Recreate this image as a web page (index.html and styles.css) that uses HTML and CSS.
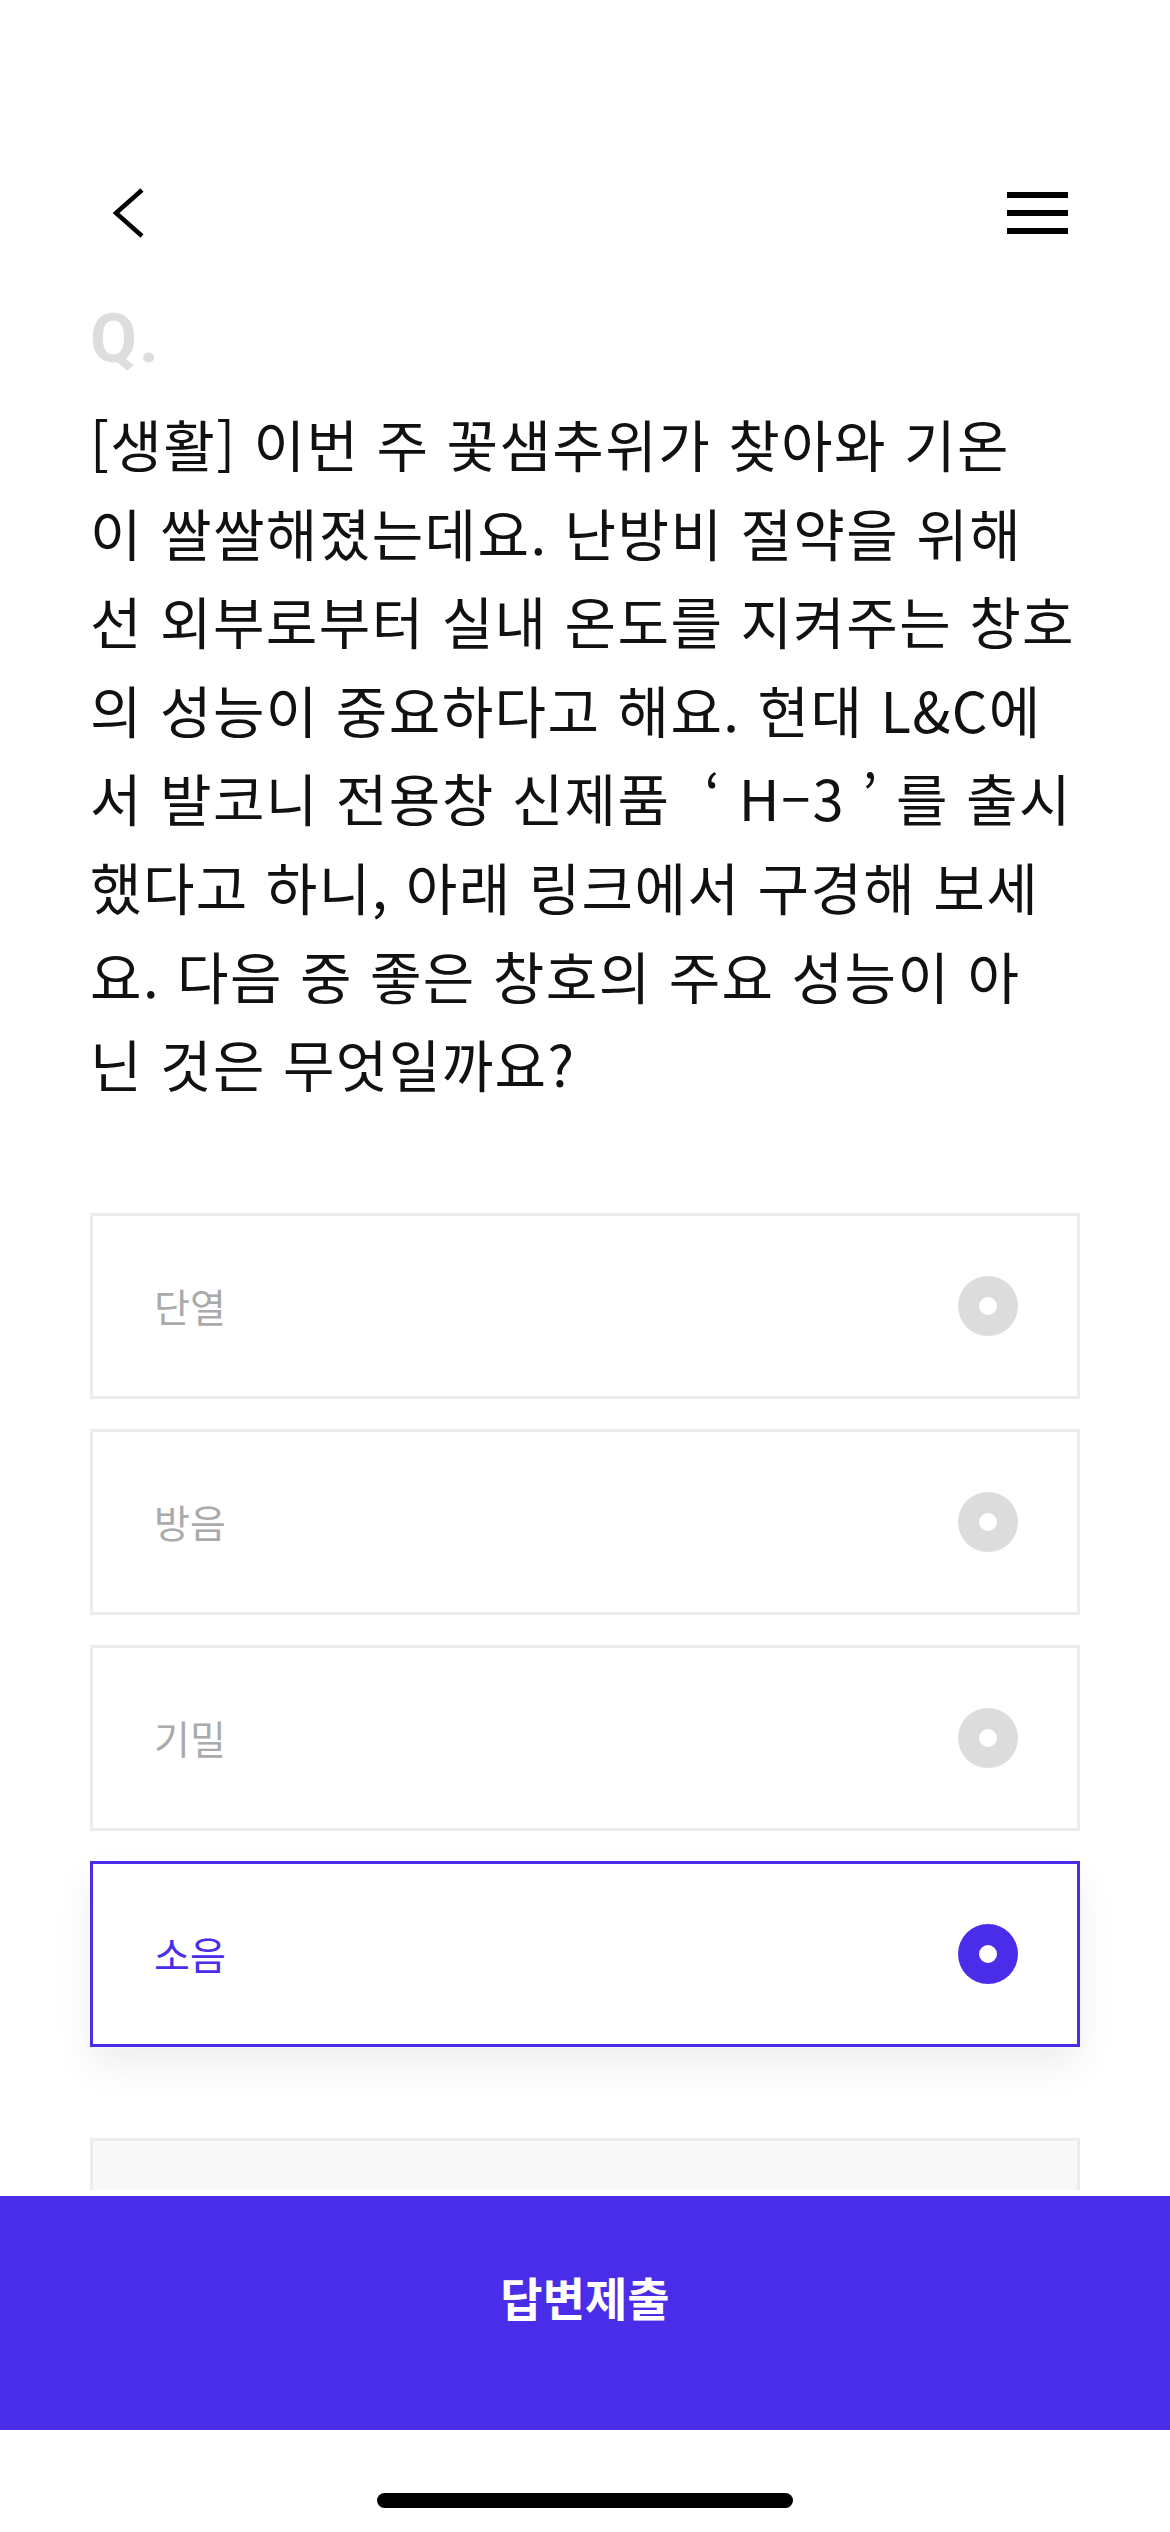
FILE: index.html
```html
<!DOCTYPE html>
<html lang="ko">
<head>
<meta charset="utf-8">
<title>퀴즈</title>
<link rel="stylesheet" href="styles.css">
</head>
<body>
<div class="screen">
  <main class="scroll">
    <header class="topbar">
      <button class="icon-btn back" aria-label="뒤로">
        <svg width="60" height="60" viewBox="0 0 60 60"><path d="M42 7 L16 30 L42 53" fill="none" stroke="#000" stroke-width="4.5" stroke-linejoin="miter"/></svg>
      </button>
      <button class="icon-btn menu" aria-label="메뉴">
        <svg width="70" height="60" viewBox="0 0 70 60"><rect x="7" y="9" width="61" height="6" fill="#000"/><rect x="7" y="27" width="61" height="6" fill="#000"/><rect x="7" y="45" width="61" height="6" fill="#000"/></svg>
      </button>
    </header>

    <section class="question">
      <div class="q-mark">Q.</div>
      <p class="q-text">[생활] 이번 주 꽃샘추위가 찾아와 기온<br>이 쌀쌀해졌는데요. 난방비 절약을 위해<br>선 외부로부터 실내 온도를 지켜주는 창호<br>의 성능이 중요하다고 해요. 현대 L&amp;C에<br>서 발코니 전용창 신제품 &nbsp;‘ H–3 ’ 를 출시<br>했다고 하니, 아래 링크에서 구경해 보세<br>요. 다음 중 좋은 창호의 주요 성능이 아<br>닌 것은 무엇일까요?</p>
    </section>

    <ul class="options">
      <li class="option"><span class="opt-label">단열</span><span class="radio"></span></li>
      <li class="option"><span class="opt-label">방음</span><span class="radio"></span></li>
      <li class="option"><span class="opt-label">기밀</span><span class="radio"></span></li>
      <li class="option selected"><span class="opt-label">소음</span><span class="radio"></span></li>
    </ul>

    <div class="link-box"></div>
  </main>

  <footer class="footer">
    <button class="submit">답변제출</button>
    <div class="home-bar"><span class="indicator"></span></div>
  </footer>
</div>
</body>
</html>
```

FILE: styles.css
```css
* { box-sizing: border-box; }
html, body { margin: 0; padding: 0; background: #fff; }
body {
  font-family: "Noto Sans CJK KR", "Noto Sans", sans-serif;
  color: #111;
}
.screen {
  width: 1170px;
  height: 2532px;
  display: flex;
  flex-direction: column;
  overflow: hidden;
}
.scroll {
  height: 2190px;
  overflow: hidden;
  flex: none;
}
.topbar {
  margin-top: 183px;
  height: 60px;
  padding: 0 100px;
  display: flex;
  justify-content: space-between;
  align-items: center;
}
.icon-btn {
  border: 0;
  background: none;
  padding: 0;
  display: block;
  height: 60px;
}
.icon-btn svg { display: block; }

.question { padding: 0 90px; }
.q-mark {
  margin-top: 56px;
  font-family: "Roboto", "Noto Sans", sans-serif;
  font-weight: 700;
  font-size: 68px;
  line-height: 80px;
  color: #dddddd;
  letter-spacing: 2px;
}
.q-text {
  margin: 20px 0 0;
  font-size: 56px;
  line-height: 88.6px;
  font-weight: 400;
  letter-spacing: 1.4px;
  color: #111;
  white-space: nowrap;
}

.options {
  list-style: none;
  margin: 105px 0 0;
  padding: 0 90px;
  display: flex;
  flex-direction: column;
  gap: 30px;
}
.option {
  height: 186px;
  border: 3px solid #ececec;
  background: #fff;
  display: flex;
  align-items: center;
  justify-content: space-between;
  padding: 0 59px 0 61px;
}
.opt-label {
  font-size: 39px;
  color: #aaaaaa;
  line-height: 1;
}
.radio {
  width: 60px;
  height: 60px;
  border-radius: 50%;
  background: #dcdcdc;
  display: flex;
  align-items: center;
  justify-content: center;
}
.radio::after {
  content: "";
  width: 18px;
  height: 18px;
  border-radius: 50%;
  background: #fff;
}
.option.selected {
  border-color: #4a2de8;
  box-shadow: 0 18px 36px rgba(0, 0, 0, 0.07);
}
.option.selected .opt-label { color: #4a2de8; }
.option.selected .radio { background: #4a2de8; }

.link-box {
  margin: 91px 90px 0;
  height: 200px;
  border: 3px solid #ececec;
  background: #f8f8f8;
}

.footer {
  flex: none;
  padding-top: 6px;
  background: #fff;
}
.submit {
  display: flex;
  width: 100%;
  height: 234px;
  border: 0;
  margin: 0;
  background: #4a2de8;
  color: #fff;
  font-family: "Noto Sans CJK KR", sans-serif;
  font-weight: 700;
  font-size: 46px;
  align-items: center;
  justify-content: center;
  padding: 0 0 34px;
}
.home-bar {
  height: 102px;
  display: flex;
  justify-content: center;
  padding-top: 63px;
}
.indicator {
  width: 416px;
  height: 15px;
  border-radius: 8px;
  background: #000;
}
```
